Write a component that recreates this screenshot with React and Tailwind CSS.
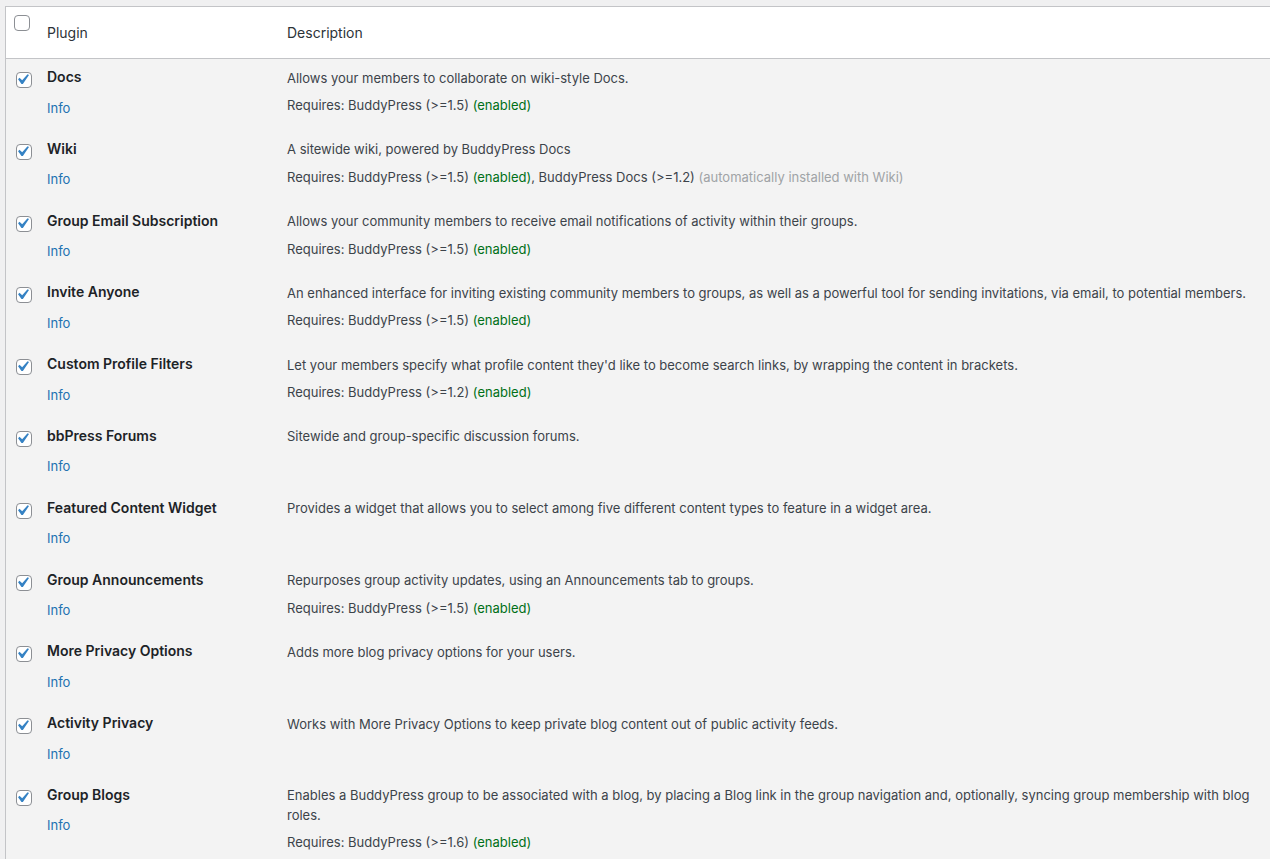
import React from "react";

const plugins = [
    { name: "Docs", desc: ["Allows your members to collaborate on wiki-style Docs."], req: [{ t: "Requires: BuddyPress (>=1.5) " }, { t: "(enabled)", c: "ok" }] },
    { name: "Wiki", desc: ["A sitewide wiki, powered by BuddyPress Docs"], req: [{ t: "Requires: BuddyPress (>=1.5) " }, { t: "(enabled)", c: "ok" }, { t: ", BuddyPress Docs (>=1.2) " }, { t: "(automatically installed with Wiki)", c: "muted" }] },
    { name: "Group Email Subscription", desc: ["Allows your community members to receive email notifications of activity within their groups."], req: [{ t: "Requires: BuddyPress (>=1.5) " }, { t: "(enabled)", c: "ok" }] },
    { name: "Invite Anyone", desc: ["An enhanced interface for inviting existing community members to groups, as well as a powerful tool for sending invitations, via email, to potential members."], req: [{ t: "Requires: BuddyPress (>=1.5) " }, { t: "(enabled)", c: "ok" }] },
    { name: "Custom Profile Filters", desc: ["Let your members specify what profile content they'd like to become search links, by wrapping the content in brackets."], req: [{ t: "Requires: BuddyPress (>=1.2) " }, { t: "(enabled)", c: "ok" }] },
    { name: "bbPress Forums", desc: ["Sitewide and group-specific discussion forums."], req: null },
    { name: "Featured Content Widget", desc: ["Provides a widget that allows you to select among five different content types to feature in a widget area."], req: null },
    { name: "Group Announcements", desc: ["Repurposes group activity updates, using an Announcements tab to groups."], req: [{ t: "Requires: BuddyPress (>=1.5) " }, { t: "(enabled)", c: "ok" }] },
    { name: "More Privacy Options", desc: ["Adds more blog privacy options for your users."], req: null },
    { name: "Activity Privacy", desc: ["Works with More Privacy Options to keep private blog content out of public activity feeds."], req: null },
    { name: "Group Blogs", desc: ["Enables a BuddyPress group to be associated with a blog, by placing a Blog link in the group navigation and, optionally, syncing group membership with blog roles."], req: [{ t: "Requires: BuddyPress (>=1.6) " }, { t: "(enabled)", c: "ok" }] }
];

const Checkbox = ({ checked }) => (
    <span className="relative block w-4 h-4 bg-white border border-[#8c8f94] rounded-[4px]">
        {checked && (
            <svg className="absolute -top-[4px] -left-[5px] w-[21px] h-[21px]" viewBox="0 0 20 20">
                <path d="M14.83 4.89l1.34.94-5.81 8.38H9.02L5.78 9.67l1.34-1.25 2.57 2.4z" fill="#3582c4" />
            </svg>
        )}
    </span>
);

const App = () => {
    return (
        <div className="min-h-screen bg-[#f0f0f1] pt-[6px] pl-[5px] overflow-hidden text-[13px] text-[#3c434a]" style={{ fontFamily: "Inter, 'Noto Sans', sans-serif" }}>
            <div className="w-[1265px] border border-r-0 border-[#c3c4c7]">
                {/* Header */}
                <div className="flex bg-white border-b border-[#c3c4c7] h-[52px]">
                    <div className="w-[31px] pl-[8px] pt-[8px]"><Checkbox /></div>
                    <div className="w-[240px] pl-[10px] pt-[16px] text-[14px] text-[#2c3338] leading-[19px]">Plugin</div>
                    <div className="flex-1 pl-[10px] pt-[16px] text-[14px] text-[#2c3338] leading-[19px]">Description</div>
                </div>

                {/* Rows */}
                {plugins.map((p, i) => (
                    <div key={i} className="flex bg-[#f3f3f3] pt-[8px] pb-[12.8px]">
                        <div className="w-[31px] pl-[10px] pt-[5px]"><Checkbox checked /></div>
                        <div className="w-[240px] pl-[10px] pr-[10px]">
                            <div className="font-semibold text-[14px] text-[#1d2327] leading-[20px]">{p.name}</div>
                            <div className="mt-[11.5px] leading-[19.5px] text-[#2271b1]">Info</div>
                        </div>
                        <div className="flex-1 pl-[10px] pr-[10px] pt-[1.5px]">
                            {p.desc.map((d, j) => (
                                <p key={j} className="leading-[19.5px] mb-[8px]">{d}</p>
                            ))}
                            {p.req && (
                                <p className="leading-[19.5px]">
                                    {p.req.map((r, k) => (
                                        <span key={k} className={r.c === "ok" ? "text-[#007017]" : r.c === "muted" ? "text-[#a0a3a6]" : ""}>{r.t}</span>
                                    ))}
                                </p>
                            )}
                        </div>
                    </div>
                ))}
            </div>
        </div>
    );
};

export default App;
